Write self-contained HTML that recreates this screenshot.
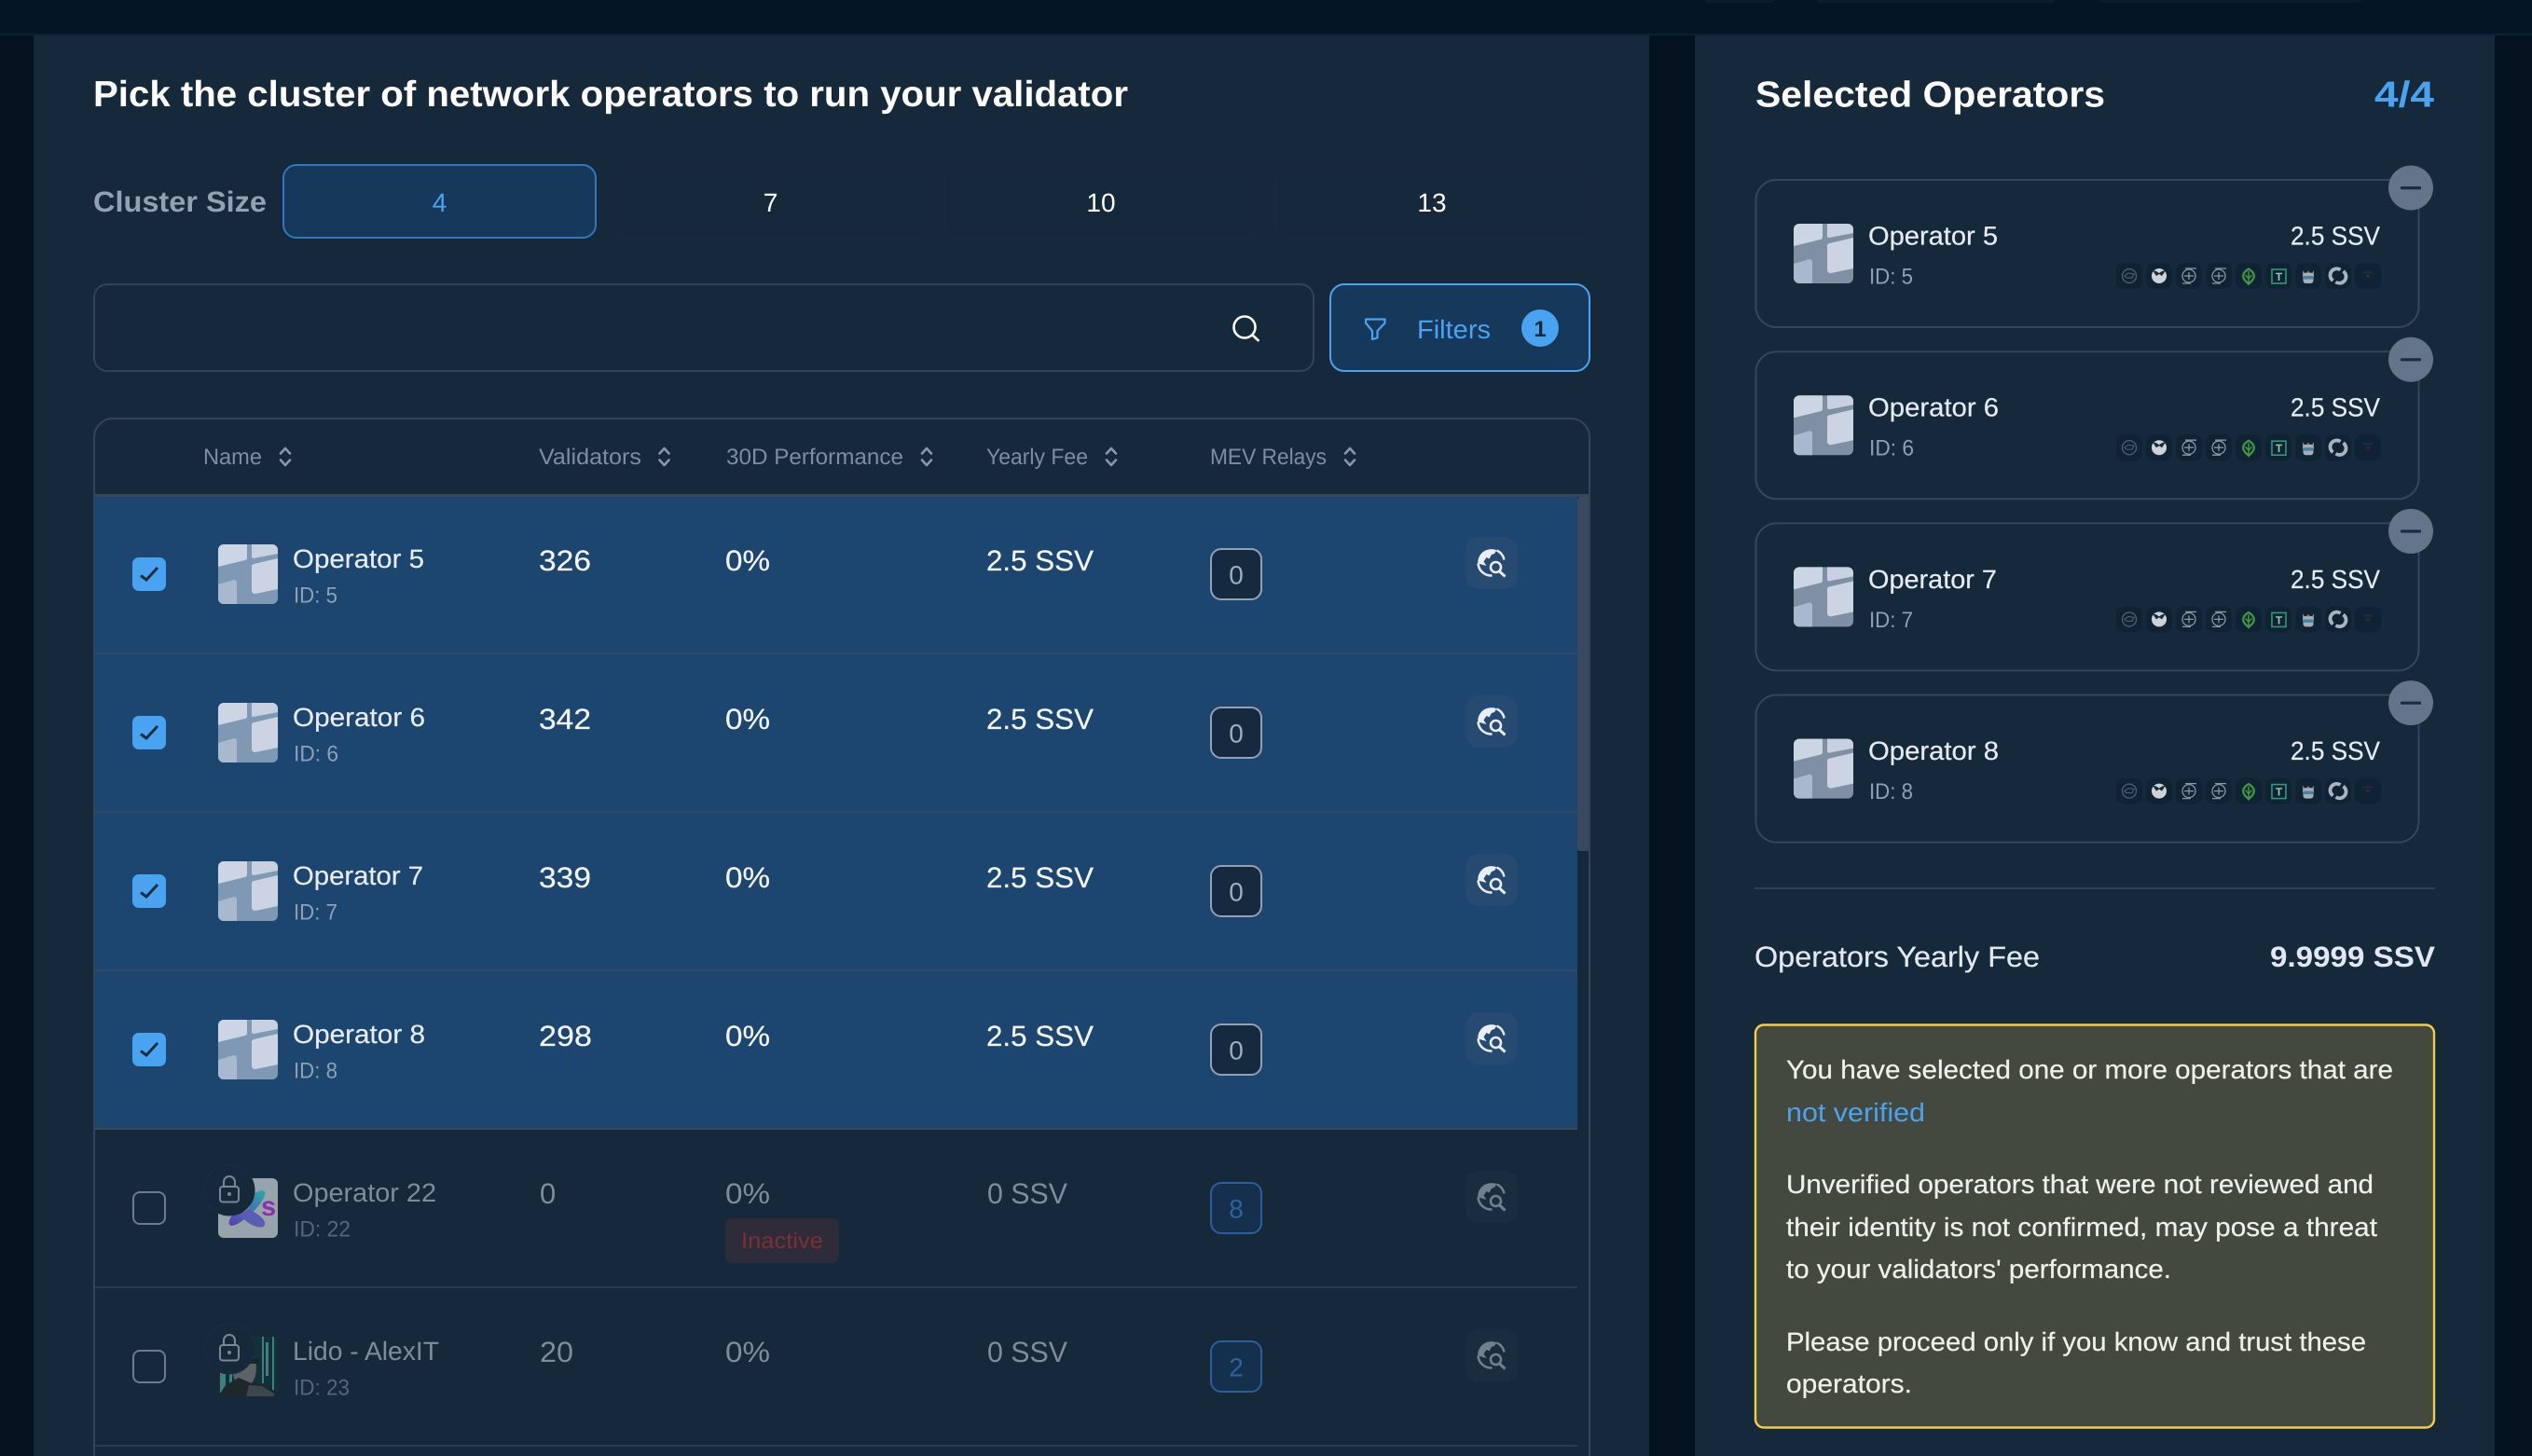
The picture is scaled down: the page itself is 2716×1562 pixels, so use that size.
<!DOCTYPE html>
<html lang="en">
<head>
<meta charset="utf-8">
<title>Pick the cluster of network operators</title>
<style>
html,body{margin:0;padding:0;width:2716px;height:1562px;overflow:hidden;background:#04121f}
svg{display:block}
text{font-family:"Liberation Sans",sans-serif;text-rendering:geometricPrecision}
.b{font-weight:700}
.h{font-size:24px;fill:#7f8da0}
.n{font-size:28px;fill:#e6ebf5;stroke:#e6ebf5;stroke-width:.2px}
.i{font-size:24px;fill:#8ea0b5}
.v{font-size:31px;fill:#f3f6fb;stroke:#f3f6fb;stroke-width:.2px}
.dn{font-size:28px;fill:#7f8c99}
.di{font-size:24px;fill:#566676}
.dv{font-size:31px;fill:#7f8c99}
.w{font-size:28px;fill:#eef0ec;stroke:#eef0ec;stroke-width:.2px}
</style>
</head>
<body>
<svg xmlns="http://www.w3.org/2000/svg" width="2716" height="1562" viewBox="0 0 2716 1562">
<defs>
<g id="av">
  <path d="M0 24V6a6 6 0 0 1 6-6H31V14a3 3 0 0 1-2.500 3Z" fill="#ccd5e3"/>
  <path d="M36 0H58a6 6 0 0 1 6 6V10L38 15a2 2 0 0 1-2-2Z" fill="#c8d1e2"/>
  <path d="M36 24a3 3 0 0 1 2.500-3L64 15V48L40 53a4 4 0 0 1-4-3Z" fill="#ccd4e4"/>
  <path d="M0 43L17 38a3 3 0 0 1 3 3V64H6a6 6 0 0 1-6-6Z" fill="#aab8cf"/>
</g>
<g id="globe">
  <path d="M-14-3A14.500 14.500 0 0 1 6-13.200L3.500-9.500L.5-8.500L-2-4L-5-5.500L-8-1L-5 3.500L-14.300 1Z"/>
</g>
<g id="sort" fill="none" stroke-width="2.600" stroke-linecap="round" stroke-linejoin="round">
  <path d="M-5-3.500L0-9L5-3.500M-5 3.500L0 9L5 3.500"/>
</g>
<g id="chips">
  <rect x="2270" y="282" width="28" height="28" rx="8" fill="#102334"/>
  <rect x="2302" y="282" width="28" height="28" rx="8" fill="#102334"/>
  <rect x="2334" y="282" width="28" height="28" rx="8" fill="#102334"/>
  <rect x="2366" y="282" width="28" height="28" rx="8" fill="#102334"/>
  <rect x="2398" y="282" width="28" height="28" rx="8" fill="#102334"/>
  <rect x="2430" y="282" width="28" height="28" rx="8" fill="#102334"/>
  <rect x="2462" y="282" width="28" height="28" rx="8" fill="#102334"/>
  <rect x="2494" y="282" width="28" height="28" rx="8" fill="#102334"/>
  <rect x="2526" y="282" width="28" height="28" rx="8" fill="#102334"/>
  <circle cx="2284" cy="296" r="7.500" fill="none" stroke="#4c5c6a" stroke-width="1.400"/>
  <path d="M2279 296l4-3 6 1-2 4h-6z" fill="none" stroke="#4c5c6a" stroke-width="1.200"/>
  <circle cx="2316" cy="296" r="8" fill="#cfd3d8"/>
  <path d="M2309 290l4 6 3-2 3 2 4-6-4 1-3 2-3-2z" fill="#172838"/>
  <g fill="none" stroke="#8a97a3" stroke-width="1.300">
    <circle cx="2348" cy="296" r="7"/><path d="M2343 296h10M2348 292v8M2344 288h12M2341 304h9"/>
    <circle cx="2380" cy="296" r="7"/><path d="M2375 296h10M2380 292v8M2376 288h12M2373 304h9"/>
  </g>
  <path d="M2412 288.500c5 3 6.500 6.500 5.500 9.500-1 3-3 4.500-5.500 6.500-2.500-2-4.500-3.500-5.500-6.500-1-3 .5-6.500 5.500-9.500z" fill="none" stroke="#3f9b42" stroke-width="2.200"/>
  <path d="M2412 291v15M2408.500 295l3.500 4 3.500-4" fill="none" stroke="#3f9b42" stroke-width="1.500"/>
  <rect x="2437" y="289" width="15" height="15" fill="none" stroke="#2f9a74" stroke-width="1.600"/>
  <path d="M2470 290l2 3h8l2-3v7h-12z" fill="#8b9098"/>
  <rect x="2470.500" y="292.500" width="11" height="11.500" rx="3" fill="#a8adb5"/>
  <rect x="2471" y="296" width="10" height="3.500" fill="#3b87a8"/>
  <path d="M2474.500 293l1.500-3 1.500 3z" fill="#b5773a"/>
  <path d="M2502.500 301a7 7 0 0 1 8-11.500M2513.500 291a7 7 0 0 1-8 11.500" fill="none" stroke="#a9b4c0" stroke-width="3.800"/>
  <circle cx="2540" cy="296" r="2" fill="#3a2430"/>
  <path d="M2535 292l10 0" stroke="#233040" stroke-width="1.500"/>
</g>
<g id="card">
  <rect x="1883.500" y="193" width="711" height="158" rx="22" fill="none" stroke="#35465a" stroke-width="2"/>
  <rect x="1924" y="240" width="64" height="64" rx="6" fill="#7f90a4"/>
  <use href="#av" x="1924" y="240"/>
  <use href="#chips"/>
  <circle cx="2586" cy="201.500" r="24" fill="#64748b"/>
  <rect x="2575" y="200" width="22" height="3.200" rx="1" fill="#1a2d40"/>
</g>
<clipPath id="a22"><rect x="234" y="1264" width="64" height="64" rx="6"/></clipPath>
<clipPath id="a23"><rect x="234" y="1434" width="64" height="64" rx="6"/></clipPath>
<linearGradient id="xg" x1="0" x2="1"><stop offset="0" stop-color="#5a3fb5"/><stop offset="1" stop-color="#2ea5a8"/></linearGradient>
</defs>

<rect width="2716" height="1562" fill="#04121f"/>
<rect width="2716" height="36" fill="#041525"/>
<rect x="1827" y="-10" width="78" height="13" rx="7" fill="#0c1d2d"/>
<rect x="1947" y="-10" width="258" height="13" rx="7" fill="#0c1d2d"/>
<rect x="2249" y="-10" width="286" height="13" rx="7" fill="#0c1d2d"/>
<rect y="36" width="2716" height="2" fill="#0f2030"/>

<!-- left panel -->
<rect x="36" y="38" width="1733" height="1524" fill="#15293a"/>
<text x="100" y="114" class="b" font-size="39" fill="#fff" textLength="1110" lengthAdjust="spacingAndGlyphs">Pick the cluster of network operators to run your validator</text>

<text x="100" y="227" class="b" font-size="31" fill="#94a1b3" textLength="186" lengthAdjust="spacingAndGlyphs">Cluster Size</text>
<rect x="304" y="177" width="335" height="78" rx="14" fill="#16385b" stroke="#2f78c0" stroke-width="2"/>
<text x="471.500" y="227" font-size="28" fill="#4aa3f0" text-anchor="middle">4</text>
<rect x="658" y="177" width="338" height="78" rx="14" fill="none" stroke="#1b2a3a" stroke-width="2"/>
<text x="826.500" y="227" font-size="28" fill="#fff" text-anchor="middle">7</text>
<rect x="1013" y="177" width="337" height="78" rx="14" fill="none" stroke="#1b2a3a" stroke-width="2"/>
<text x="1181" y="227" font-size="28" fill="#fff" text-anchor="middle">10</text>
<rect x="1368" y="177" width="337" height="78" rx="14" fill="none" stroke="#1b2a3a" stroke-width="2"/>
<text x="1536" y="227" font-size="28" fill="#fff" text-anchor="middle">13</text>

<rect x="101" y="305" width="1308" height="93" rx="14" fill="none" stroke="#334355" stroke-width="2"/>
<circle cx="1335" cy="351" r="11.500" fill="none" stroke="#fff" stroke-width="2.600"/>
<path d="M1343.500 359.500l6 5.500" stroke="#fff" stroke-width="2.800" stroke-linecap="round"/>
<rect x="1427" y="305" width="278" height="93" rx="15" fill="#16385b" stroke="#4aa3f0" stroke-width="2"/>
<path d="M1465 342.500H1485.500V346.500L1477.500 355V362.500L1472 364V355L1465 346.500Z" fill="none" stroke="#4aa3f0" stroke-width="2.200" stroke-linejoin="round"/>
<text x="1520" y="363" font-size="28" fill="#4aa3f0" textLength="79" lengthAdjust="spacingAndGlyphs">Filters</text>
<circle cx="1652" cy="352" r="20" fill="#4aa3f0"/>
<text x="1652" y="361" class="b" font-size="24" fill="#152a3c" text-anchor="middle">1</text>

<!-- table -->
<rect x="102" y="533" width="1590" height="678" fill="#1c466f"/>
<rect x="102" y="700" width="1590" height="2" fill="#35486a" opacity=".9"/>
<rect x="102" y="870" width="1590" height="2" fill="#35486a" opacity=".9"/>
<rect x="102" y="1040" width="1590" height="2" fill="#35486a" opacity=".9"/>
<rect x="102" y="1210" width="1590" height="2" fill="#3a4a5e"/>
<rect x="102" y="1380" width="1590" height="2" fill="#2a3b4e"/>
<rect x="102" y="1550" width="1590" height="2" fill="#2a3b4e"/>
<rect x="102" y="530" width="1603" height="3" fill="#35465a"/>
<rect x="1692" y="533" width="14" height="380" rx="3" fill="#3a4a5e"/>
<path d="M101 1562V469a20 20 0 0 1 20-20H1685a20 20 0 0 1 20 20V1562" fill="none" stroke="#334455" stroke-width="2"/>

<text x="218" y="498" class="h" textLength="63" lengthAdjust="spacingAndGlyphs">Name</text>
<use href="#sort" x="306" y="490" stroke="#8a97a8"/>
<text x="578" y="498" class="h" textLength="110" lengthAdjust="spacingAndGlyphs">Validators</text>
<use href="#sort" x="712.500" y="490" stroke="#8a97a8"/>
<text x="779" y="498" class="h" textLength="190" lengthAdjust="spacingAndGlyphs">30D Performance</text>
<use href="#sort" x="994" y="490" stroke="#8a97a8"/>
<text x="1058" y="498" class="h" textLength="109" lengthAdjust="spacingAndGlyphs">Yearly Fee</text>
<use href="#sort" x="1192" y="490" stroke="#8a97a8"/>
<text x="1298" y="498" class="h" textLength="125" lengthAdjust="spacingAndGlyphs">MEV Relays</text>
<use href="#sort" x="1448" y="490" stroke="#8a97a8"/>

<!-- selected rows -->
<g id="r0">
  <rect x="142" y="598" width="36" height="36" rx="7" fill="#4aa3f0"/>
  <path d="M151 617.500l6 4.500l12-13" fill="none" stroke="#1a2d3f" stroke-width="3"/>
  <rect x="234" y="584" width="64" height="64" rx="6" fill="#7f99b5"/>
  <use href="#av" x="234" y="584"/>
  <text x="314" y="609" class="n" textLength="141" lengthAdjust="spacingAndGlyphs">Operator 5</text>
  <text x="315" y="646.500" class="i" textLength="47" lengthAdjust="spacingAndGlyphs">ID: 5</text>
  <text x="578" y="612" class="v" textLength="56" lengthAdjust="spacingAndGlyphs">326</text>
  <text x="778" y="612" class="v" textLength="48" lengthAdjust="spacingAndGlyphs">0%</text>
  <text x="1058" y="612" class="v" textLength="115" lengthAdjust="spacingAndGlyphs">2.5 SSV</text>
  <rect x="1299" y="589" width="54" height="54" rx="11" fill="#152a3e" stroke="#95a0b3" stroke-width="2"/>
  <text x="1326" y="626.500" font-size="28" fill="#a0abbd" text-anchor="middle">0</text>
  <rect x="1572" y="576" width="56" height="56" rx="14" fill="#264a72"/>
  <g transform="translate(1599.500 603.500)" fill="#e8edf7"><use href="#globe"/>
    <path d="M6-13A14 14 0 0 1 14-3M-14 1A14 14 0 0 0 1 14" fill="none" stroke="#e8edf7" stroke-width="2.500"/>
    <circle cx="5" cy="5" r="5.500" fill="none" stroke="#e8edf7" stroke-width="2.600"/>
    <path d="M9 9.500l6 5.500" stroke="#e8edf7" stroke-width="3"/></g>
</g>
<g id="r1" transform="translate(0 170)">
  <rect x="142" y="598" width="36" height="36" rx="7" fill="#4aa3f0"/>
  <path d="M151 617.500l6 4.500l12-13" fill="none" stroke="#1a2d3f" stroke-width="3"/>
  <rect x="234" y="584" width="64" height="64" rx="6" fill="#7f99b5"/>
  <use href="#av" x="234" y="584"/>
  <text x="314" y="609" class="n" textLength="142" lengthAdjust="spacingAndGlyphs">Operator 6</text>
  <text x="315" y="646.500" class="i" textLength="48" lengthAdjust="spacingAndGlyphs">ID: 6</text>
  <text x="578" y="612" class="v" textLength="56" lengthAdjust="spacingAndGlyphs">342</text>
  <text x="778" y="612" class="v" textLength="48" lengthAdjust="spacingAndGlyphs">0%</text>
  <text x="1058" y="612" class="v" textLength="115" lengthAdjust="spacingAndGlyphs">2.5 SSV</text>
  <rect x="1299" y="589" width="54" height="54" rx="11" fill="#152a3e" stroke="#95a0b3" stroke-width="2"/>
  <text x="1326" y="626.500" font-size="28" fill="#a0abbd" text-anchor="middle">0</text>
  <rect x="1572" y="576" width="56" height="56" rx="14" fill="#264a72"/>
  <g transform="translate(1599.500 603.500)" fill="#e8edf7"><use href="#globe"/>
    <path d="M6-13A14 14 0 0 1 14-3M-14 1A14 14 0 0 0 1 14" fill="none" stroke="#e8edf7" stroke-width="2.500"/>
    <circle cx="5" cy="5" r="5.500" fill="none" stroke="#e8edf7" stroke-width="2.600"/>
    <path d="M9 9.500l6 5.500" stroke="#e8edf7" stroke-width="3"/></g>
</g>
<g id="r2" transform="translate(0 340)">
  <rect x="142" y="598" width="36" height="36" rx="7" fill="#4aa3f0"/>
  <path d="M151 617.500l6 4.500l12-13" fill="none" stroke="#1a2d3f" stroke-width="3"/>
  <rect x="234" y="584" width="64" height="64" rx="6" fill="#7f99b5"/>
  <use href="#av" x="234" y="584"/>
  <text x="314" y="609" class="n" textLength="140" lengthAdjust="spacingAndGlyphs">Operator 7</text>
  <text x="315" y="646.500" class="i" textLength="47" lengthAdjust="spacingAndGlyphs">ID: 7</text>
  <text x="578" y="612" class="v" textLength="56" lengthAdjust="spacingAndGlyphs">339</text>
  <text x="778" y="612" class="v" textLength="48" lengthAdjust="spacingAndGlyphs">0%</text>
  <text x="1058" y="612" class="v" textLength="115" lengthAdjust="spacingAndGlyphs">2.5 SSV</text>
  <rect x="1299" y="589" width="54" height="54" rx="11" fill="#152a3e" stroke="#95a0b3" stroke-width="2"/>
  <text x="1326" y="626.500" font-size="28" fill="#a0abbd" text-anchor="middle">0</text>
  <rect x="1572" y="576" width="56" height="56" rx="14" fill="#264a72"/>
  <g transform="translate(1599.500 603.500)" fill="#e8edf7"><use href="#globe"/>
    <path d="M6-13A14 14 0 0 1 14-3M-14 1A14 14 0 0 0 1 14" fill="none" stroke="#e8edf7" stroke-width="2.500"/>
    <circle cx="5" cy="5" r="5.500" fill="none" stroke="#e8edf7" stroke-width="2.600"/>
    <path d="M9 9.500l6 5.500" stroke="#e8edf7" stroke-width="3"/></g>
</g>
<g id="r3" transform="translate(0 510)">
  <rect x="142" y="598" width="36" height="36" rx="7" fill="#4aa3f0"/>
  <path d="M151 617.500l6 4.500l12-13" fill="none" stroke="#1a2d3f" stroke-width="3"/>
  <rect x="234" y="584" width="64" height="64" rx="6" fill="#7f99b5"/>
  <use href="#av" x="234" y="584"/>
  <text x="314" y="609" class="n" textLength="142" lengthAdjust="spacingAndGlyphs">Operator 8</text>
  <text x="315" y="646.500" class="i" textLength="47" lengthAdjust="spacingAndGlyphs">ID: 8</text>
  <text x="578" y="612" class="v" textLength="57" lengthAdjust="spacingAndGlyphs">298</text>
  <text x="778" y="612" class="v" textLength="48" lengthAdjust="spacingAndGlyphs">0%</text>
  <text x="1058" y="612" class="v" textLength="115" lengthAdjust="spacingAndGlyphs">2.5 SSV</text>
  <rect x="1299" y="589" width="54" height="54" rx="11" fill="#152a3e" stroke="#95a0b3" stroke-width="2"/>
  <text x="1326" y="626.500" font-size="28" fill="#a0abbd" text-anchor="middle">0</text>
  <rect x="1572" y="576" width="56" height="56" rx="14" fill="#264a72"/>
  <g transform="translate(1599.500 603.500)" fill="#e8edf7"><use href="#globe"/>
    <path d="M6-13A14 14 0 0 1 14-3M-14 1A14 14 0 0 0 1 14" fill="none" stroke="#e8edf7" stroke-width="2.500"/>
    <circle cx="5" cy="5" r="5.500" fill="none" stroke="#e8edf7" stroke-width="2.600"/>
    <path d="M9 9.500l6 5.500" stroke="#e8edf7" stroke-width="3"/></g>
</g>

<!-- row: Operator 22 -->
<rect x="143" y="1279" width="34" height="34" rx="7" fill="none" stroke="#6d7c8b" stroke-width="2"/>
<g clip-path="url(#a22)">
  <rect x="234" y="1264" width="64" height="64" fill="#98a4ac"/>
  <ellipse cx="265" cy="1296" rx="26" ry="7.500" transform="rotate(-44 265 1296)" fill="url(#xg)"/>
  <ellipse cx="271" cy="1307" rx="15" ry="6.500" transform="rotate(31 271 1307)" fill="#5a5cb5"/>
  <ellipse cx="264" cy="1296" rx="6" ry="2" transform="rotate(-44 264 1296)" fill="#98a4ac"/>
  <text x="280" y="1304" class="b" font-size="29" fill="#8a2fb4">s</text>
</g>
<circle cx="246" cy="1277" r="27" fill="#15293a" stroke="#1a2e40" stroke-width="1"/>
<rect x="236" y="1273" width="20" height="16.500" rx="3" fill="none" stroke="#7a8794" stroke-width="2"/>
<path d="M240 1273v-5a6 6 0 0 1 12 0v5" fill="none" stroke="#7a8794" stroke-width="2"/>
<circle cx="246" cy="1281" r="2" fill="#7a8794"/>
<text x="314" y="1289" class="dn" textLength="154" lengthAdjust="spacingAndGlyphs">Operator 22</text>
<text x="315" y="1326.500" class="di" textLength="61" lengthAdjust="spacingAndGlyphs">ID: 22</text>
<text x="579" y="1291" class="dv">0</text>
<text x="778" y="1291" class="dv" textLength="48" lengthAdjust="spacingAndGlyphs">0%</text>
<text x="1059" y="1291" class="dv" textLength="86" lengthAdjust="spacingAndGlyphs">0 SSV</text>
<rect x="778" y="1307" width="122" height="48" rx="7" fill="#2e2c38"/>
<text x="795" y="1339" font-size="24" fill="#7c2f35" textLength="88" lengthAdjust="spacingAndGlyphs">Inactive</text>
<rect x="1299" y="1269" width="54" height="54" rx="11" fill="#15304d" stroke="#2a5f99" stroke-width="2"/>
<text x="1326" y="1306.500" font-size="28" fill="#2c62a0" text-anchor="middle">8</text>
<rect x="1572" y="1256" width="56" height="56" rx="14" fill="#1a2d3f"/>
<g transform="translate(1599.500 1283.500)" fill="#71808e"><use href="#globe"/>
  <path d="M6-13A14 14 0 0 1 14-3M-14 1A14 14 0 0 0 1 14" fill="none" stroke="#71808e" stroke-width="2.500"/>
  <circle cx="5" cy="5" r="5.500" fill="none" stroke="#71808e" stroke-width="2.600"/>
  <path d="M9 9.500l6 5.500" stroke="#71808e" stroke-width="3"/></g>

<!-- row: Lido - AlexIT -->
<rect x="143" y="1449" width="34" height="34" rx="7" fill="none" stroke="#6d7c8b" stroke-width="2"/>
<g clip-path="url(#a23)">
  <rect x="234" y="1434" width="64" height="64" fill="#12303a"/>
  <path d="M236 1472h6v22h-6zM281 1434h2v50h-2zM285 1440h3v36h-3zM292 1434h2v60h-2zM246 1474h3v12h-3z" fill="#3f7f7d"/>
  <ellipse cx="262" cy="1468" rx="13" ry="20" fill="#5d6264"/>
  <rect x="262" y="1457" width="16" height="6" rx="2" fill="#1a2528"/>
  <path d="M234 1498l8-12 14-8 14 6 14 2 14 8v4z" fill="#1e272b"/>
  <path d="M264 1498l3-12 14 1 13 8v3z" fill="#3c4749"/>
</g>
<circle cx="246" cy="1447" r="27" fill="#15293a" stroke="#1a2e40" stroke-width="1"/>
<rect x="236" y="1443" width="20" height="16.500" rx="3" fill="none" stroke="#7a8794" stroke-width="2"/>
<path d="M240 1443v-5a6 6 0 0 1 12 0v5" fill="none" stroke="#7a8794" stroke-width="2"/>
<circle cx="246" cy="1451" r="2" fill="#7a8794"/>
<text x="314" y="1459" class="dn" textLength="157" lengthAdjust="spacingAndGlyphs">Lido - AlexIT</text>
<text x="315" y="1496.500" class="di" textLength="60" lengthAdjust="spacingAndGlyphs">ID: 23</text>
<text x="579" y="1461" class="dv" textLength="36" lengthAdjust="spacingAndGlyphs">20</text>
<text x="778" y="1461" class="dv" textLength="48" lengthAdjust="spacingAndGlyphs">0%</text>
<text x="1059" y="1461" class="dv" textLength="86" lengthAdjust="spacingAndGlyphs">0 SSV</text>
<rect x="1299" y="1439" width="54" height="54" rx="11" fill="#15304d" stroke="#2a5f99" stroke-width="2"/>
<text x="1326" y="1476.500" font-size="28" fill="#2c62a0" text-anchor="middle">2</text>
<rect x="1572" y="1426" width="56" height="56" rx="14" fill="#1a2d3f"/>
<g transform="translate(1599.500 1453.500)" fill="#71808e"><use href="#globe"/>
  <path d="M6-13A14 14 0 0 1 14-3M-14 1A14 14 0 0 0 1 14" fill="none" stroke="#71808e" stroke-width="2.500"/>
  <circle cx="5" cy="5" r="5.500" fill="none" stroke="#71808e" stroke-width="2.600"/>
  <path d="M9 9.500l6 5.500" stroke="#71808e" stroke-width="3"/></g>

<!-- right panel -->
<rect x="1818" y="38" width="858" height="1524" fill="#15293a"/>
<text x="1883" y="114.500" class="b" font-size="39" fill="#fff" textLength="375" lengthAdjust="spacingAndGlyphs">Selected Operators</text>
<text x="2547" y="114.500" class="b" font-size="39" fill="#4aa3f0" textLength="64" lengthAdjust="spacingAndGlyphs">4/4</text>

<g>
  <use href="#card"/>
  <text x="2004" y="262.500" class="n" textLength="139" lengthAdjust="spacingAndGlyphs">Operator 5</text>
  <text x="2005" y="304.500" class="i" textLength="47" lengthAdjust="spacingAndGlyphs">ID: 5</text>
  <text x="2457" y="262.500" class="n" textLength="96" lengthAdjust="spacingAndGlyphs">2.5 SSV</text>
  <text x="2444.500" y="301" class="b" font-size="12" fill="#8bc9b0" text-anchor="middle">T</text>
</g>
<g transform="translate(0 184.200)">
  <use href="#card"/>
  <text x="2004" y="262.500" class="n" textLength="140" lengthAdjust="spacingAndGlyphs">Operator 6</text>
  <text x="2005" y="304.500" class="i" textLength="48" lengthAdjust="spacingAndGlyphs">ID: 6</text>
  <text x="2457" y="262.500" class="n" textLength="96" lengthAdjust="spacingAndGlyphs">2.5 SSV</text>
  <text x="2444.500" y="301" class="b" font-size="12" fill="#8bc9b0" text-anchor="middle">T</text>
</g>
<g transform="translate(0 368.400)">
  <use href="#card"/>
  <text x="2004" y="262.500" class="n" textLength="138" lengthAdjust="spacingAndGlyphs">Operator 7</text>
  <text x="2005" y="304.500" class="i" textLength="47" lengthAdjust="spacingAndGlyphs">ID: 7</text>
  <text x="2457" y="262.500" class="n" textLength="96" lengthAdjust="spacingAndGlyphs">2.5 SSV</text>
  <text x="2444.500" y="301" class="b" font-size="12" fill="#8bc9b0" text-anchor="middle">T</text>
</g>
<g transform="translate(0 552.600)">
  <use href="#card"/>
  <text x="2004" y="262.500" class="n" textLength="140" lengthAdjust="spacingAndGlyphs">Operator 8</text>
  <text x="2005" y="304.500" class="i" textLength="47" lengthAdjust="spacingAndGlyphs">ID: 8</text>
  <text x="2457" y="262.500" class="n" textLength="96" lengthAdjust="spacingAndGlyphs">2.5 SSV</text>
  <text x="2444.500" y="301" class="b" font-size="12" fill="#8bc9b0" text-anchor="middle">T</text>
</g>

<rect x="1882" y="952" width="730" height="2" fill="#2f4053"/>
<text x="1882" y="1037" font-size="31" fill="#e2e7f0" stroke="#e2e7f0" stroke-width=".2" textLength="306" lengthAdjust="spacingAndGlyphs">Operators Yearly Fee</text>
<text x="2435" y="1037" class="b" font-size="31" fill="#e2e7f3" textLength="177" lengthAdjust="spacingAndGlyphs">9.9999 SSV</text>

<rect x="1883" y="1099.500" width="728" height="432" rx="9" fill="#44493f" stroke="#f0ce4a" stroke-width="2.400"/>
<text x="1916" y="1157" class="w" textLength="651" lengthAdjust="spacingAndGlyphs">You have selected one or more operators that are</text>
<text x="1916" y="1203" font-size="28" fill="#4aa3f0" textLength="149" lengthAdjust="spacingAndGlyphs">not verified</text>
<text x="1916" y="1280" class="w" textLength="630" lengthAdjust="spacingAndGlyphs">Unverified operators that were not reviewed and</text>
<text x="1916" y="1326" class="w" textLength="634" lengthAdjust="spacingAndGlyphs">their identity is not confirmed, may pose a threat</text>
<text x="1916" y="1371" class="w" textLength="413" lengthAdjust="spacingAndGlyphs">to your validators' performance.</text>
<text x="1916" y="1449" class="w" textLength="622" lengthAdjust="spacingAndGlyphs">Please proceed only if you know and trust these</text>
<text x="1916" y="1494" class="w" textLength="135" lengthAdjust="spacingAndGlyphs">operators.</text>
</svg>
</body>
</html>
